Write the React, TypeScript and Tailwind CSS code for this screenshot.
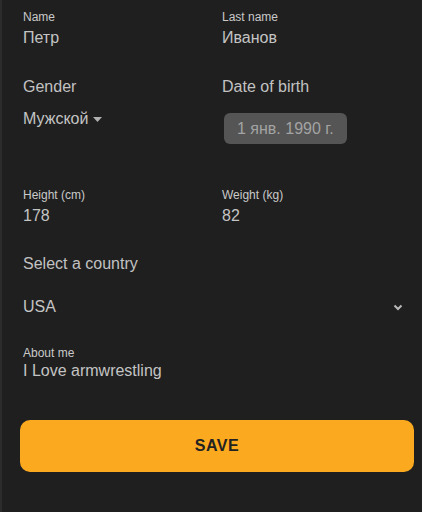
import React from 'react';

const Label: React.FC<{ children: React.ReactNode }> = ({ children }) => (
  <div className="text-[12px] leading-[16px] text-[#c9c9c9]">{children}</div>
);

const Value: React.FC<{ children: React.ReactNode }> = ({ children }) => (
  <div className="mt-[3px] text-[16px] leading-[20px] text-[#c4c4c4]">{children}</div>
);

export default function App() {
  return (
    <div
      className="min-h-[512px] w-full bg-[#1f1f1f] border-l-2 border-[#2c2c2c] pl-[18px] pr-[8px] pt-[9px]"
      style={{ fontFamily: '"Liberation Sans", Arial, sans-serif' }}
    >
      <div className="pl-[3px]">
        {/* name row */}
        <div className="grid grid-cols-[199px_1fr]">
          <div>
            <Label>Name</Label>
            <Value>Петр</Value>
          </div>
          <div>
            <Label>Last name</Label>
            <Value>Иванов</Value>
          </div>
        </div>

        {/* gender / birth date */}
        <div className="mt-[29px] grid grid-cols-[199px_1fr] items-start">
          <div>
            <div className="text-[16px] leading-[20px] text-[#c2c2c2]">Gender</div>
            <div className="mt-[12px] flex items-center text-[16px] leading-[20px] text-[#c4c4c4]">
              <span>Мужской</span>
              <svg width="9" height="5" viewBox="0 0 9 5" className="ml-[5px] mt-[1px]">
                <polygon points="0,0 9,0 4.5,5" fill="#b0b0b0" />
              </svg>
            </div>
          </div>
          <div>
            <div className="text-[16px] leading-[20px] text-[#c2c2c2]">Date of birth</div>
            <div className="ml-[2px] mt-[16px] inline-flex h-[31px] items-center rounded-[6px] bg-[#555555] px-[13px] text-[16px] leading-[20px] text-[#a3a3a3]">
              1 янв. 1990 г.
            </div>
          </div>
        </div>

        {/* height / weight */}
        <div className="mt-[43px] grid grid-cols-[199px_1fr]">
          <div>
            <Label>Height (cm)</Label>
            <Value>178</Value>
          </div>
          <div>
            <Label>Weight (kg)</Label>
            <Value>82</Value>
          </div>
        </div>

        {/* country */}
        <div className="mt-[28px] text-[16px] leading-[20px] text-[#c2c2c2]">Select a country</div>
        <div className="mt-[23px] flex items-center justify-between pr-[11px] text-[16px] leading-[20px] text-[#c4c4c4]">
          <span>USA</span>
          <svg width="10" height="7" viewBox="0 0 10 7" className="mt-[1px]">
            <path d="M1.5 1.5l3.5 3.5 3.5-3.5" fill="none" stroke="#b8b8b8" strokeWidth="2" />
          </svg>
        </div>

        {/* about */}
        <div className="mt-[28px]">
          <Label>About me</Label>
          <div className="text-[16px] leading-[20px] text-[#c4c4c4]">I Love armwrestling</div>
        </div>
      </div>

      <button className="mt-[39px] flex h-[52px] w-full items-center justify-center rounded-[10px] bg-[#fba91f] text-[16px] font-bold tracking-[0.5px] text-[#222222]">
        SAVE
      </button>
    </div>
  );
}
